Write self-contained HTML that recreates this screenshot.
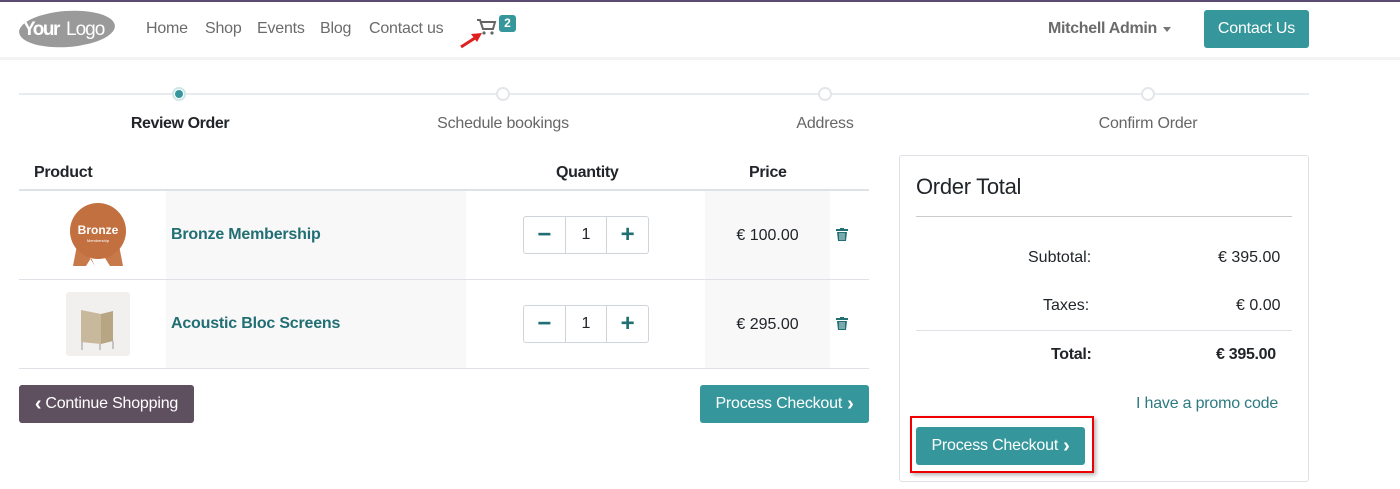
<!DOCTYPE html>
<html><head><meta charset="utf-8"><style>
*{box-sizing:border-box;margin:0;padding:0}
body{width:1400px;height:489px;overflow:hidden;background:#fff;font-family:"Liberation Sans",sans-serif;color:#212529;position:relative;font-size:16px}
.abs{position:absolute}
.nav a{position:absolute;top:20px;color:#6b6b6b;font-size:16px;letter-spacing:-.2px}
.btn{position:absolute;background:#35979c;color:#fff;border-radius:3px;font-size:16px;display:flex;align-items:center;justify-content:center;letter-spacing:-.2px}
.step{position:absolute;top:87px;width:14px;height:14px;border-radius:50%;border:2px solid #e4e6ea;background:#fff}
.lbl{position:absolute;top:115px;font-size:16px;color:#666;transform:translateX(-50%);white-space:nowrap;letter-spacing:-.2px}
.th{position:absolute;top:164px;font-weight:bold;font-size:16px;letter-spacing:-.3px}
.hr{position:absolute;height:1px;background:#dee2e6}
.pname{position:absolute;font-weight:bold;color:#216f73;font-size:16px;letter-spacing:-.2px}
.qty{position:absolute;left:523px;width:126px;height:38px;border:1px solid #ced4da;border-radius:3px;display:flex}
.qty div{flex:1;display:flex;align-items:center;justify-content:center;font-size:16px}
.qty div+div{border-left:1px solid #ced4da}
.qty .s{color:#216f73;font-size:24px;font-weight:bold}
.price{position:absolute;left:705px;width:125px;text-align:center;font-size:16px}
.trash{position:absolute;left:836px;width:12px;height:13px}
</style></head><body>
<div class="abs" style="left:0;top:0;width:1400px;height:2px;background:#5b4a72"></div>
<div class="abs" style="left:0;top:57px;width:1400px;height:3px;background:#f3f3f4"></div>
<svg class="abs" style="left:18px;top:10px" width="98" height="38"><ellipse cx="49" cy="19" rx="48" ry="18" fill="#9a9a9a" transform="rotate(-4 49 19)"/><text x="5" y="25" font-family="Liberation Sans" font-size="19" font-weight="bold" fill="#fff" letter-spacing="-1.5">Your</text><text x="48" y="25" font-family="Liberation Sans" font-size="19" fill="#fff" letter-spacing="-1">Logo</text></svg>
<div class="nav"><a style="left:146px">Home</a><a style="left:205px">Shop</a><a style="left:257px">Events</a><a style="left:320px">Blog</a><a style="left:369px">Contact us</a></div>
<svg class="abs" style="left:476px;top:18px" width="22" height="18"><path d="M1 2h3l3 9h10l2-7H5" fill="none" stroke="#666" stroke-width="2"/><circle cx="8" cy="15" r="1.6" fill="#666"/><circle cx="16" cy="15" r="1.6" fill="#666"/></svg>
<div class="abs" style="left:499px;top:15px;width:17px;height:17px;background:#35979c;border-radius:3px;color:#fff;font-size:12px;font-weight:bold;text-align:center;line-height:17px">2</div>
<svg class="abs" style="left:458px;top:30px" width="26" height="20"><path d="M3 17L17 8" stroke="#e02020" stroke-width="3"/><path d="M24 3L13 4l6 8z" fill="#e02020"/></svg>
<div class="abs" style="left:1048px;top:20px;font-weight:bold;color:#6b6b6b;letter-spacing:-.3px">Mitchell Admin</div>
<div class="abs" style="left:1163px;top:27px;border:4px solid transparent;border-top:5px solid #777"></div>
<div class="btn" style="left:1204px;top:10px;width:105px;height:38px">Contact Us</div>

<div class="hr" style="left:19px;top:93px;width:1290px;height:2px;background:#e9ecef"></div>
<div class="step" style="left:172px;border-color:#d0e6e7;"><div style="width:8px;height:8px;margin:1px;border-radius:50%;background:#35979c"></div></div>
<div class="step" style="left:496px"></div><div class="step" style="left:818px"></div><div class="step" style="left:1141px"></div>
<div class="lbl" style="left:180px;color:#212529;font-weight:bold;letter-spacing:-.4px">Review Order</div>
<div class="lbl" style="left:503px">Schedule bookings</div>
<div class="lbl" style="left:825px">Address</div>
<div class="lbl" style="left:1148px">Confirm Order</div>

<div class="th" style="left:34px">Product</div><div class="th" style="left:556px">Quantity</div><div class="th" style="left:749px">Price</div>
<div class="hr" style="left:19px;top:189px;width:850px;height:2px"></div>
<div class="abs" style="left:166px;top:191px;width:300px;height:177px;background:#f8f8f9"></div>
<div class="abs" style="left:705px;top:191px;width:125px;height:177px;background:#f8f8f9"></div>
<div class="hr" style="left:19px;top:279px;width:850px"></div>
<div class="hr" style="left:19px;top:368px;width:850px"></div>
<svg class="abs" style="left:68px;top:202px" width="60" height="66"><path d="M10 38L5 64h13l5-8 4 8h0z M50 38l5 26H42l-5-8 8-14z" fill="#c8794a"/><circle cx="30" cy="29" r="28" fill="#c27040"/><text x="30" y="32" text-anchor="middle" font-family="Liberation Sans" font-weight="bold" font-size="12" fill="#fff">Bronze</text><text x="30" y="40" text-anchor="middle" font-size="4" fill="#fff">Membership</text></svg>
<div class="abs" style="left:66px;top:292px;width:64px;height:64px;background:#f1f0ee;border-radius:3px"><svg width="64" height="64"><path d="M15 18l20 4v30l-20-2z" fill="#c9b99c"/><path d="M35 22l12-3v30l-12 3z" fill="#b7a583"/><path d="M16 50v8M34 52v6M47 49v8" stroke="#999"/></svg></div>
<div class="pname" style="left:171px;top:226px">Bronze Membership</div>
<div class="pname" style="left:171px;top:315px">Acoustic Bloc Screens</div>
<div class="qty" style="top:216px"><div class="s">−</div><div>1</div><div class="s">+</div></div>
<div class="qty" style="top:305px"><div class="s">−</div><div>1</div><div class="s">+</div></div>
<div class="price" style="top:227px">€ 100.00</div><div class="price" style="top:316px">€ 295.00</div>
<svg class="trash" style="top:228px" viewBox="0 0 12 13"><rect x="0" y="1" width="12" height="2" fill="#216f73"/><rect x="4" y="0" width="4" height="2" fill="#216f73"/><path d="M1 4h10l-1 9H2z" fill="#216f73"/><path d="M4 5v7M6 5v7M8 5v7" stroke="#fff" stroke-width=".8"/></svg>
<svg class="trash" style="top:317px" viewBox="0 0 12 13"><rect x="0" y="1" width="12" height="2" fill="#216f73"/><rect x="4" y="0" width="4" height="2" fill="#216f73"/><path d="M1 4h10l-1 9H2z" fill="#216f73"/><path d="M4 5v7M6 5v7M8 5v7" stroke="#fff" stroke-width=".8"/></svg>
<div class="btn" style="left:19px;top:385px;width:175px;height:38px;background:#5f5060"><b style="font-size:20px;margin-right:4px">‹</b>Continue Shopping</div>
<div class="btn" style="left:700px;top:385px;width:169px;height:38px">Process Checkout<b style="font-size:20px;margin-left:5px">›</b></div>

<div class="abs" style="left:899px;top:155px;width:410px;height:327px;border:1px solid #dee2e6;border-radius:3px"></div>
<div class="abs" style="left:916px;top:174px;font-size:22px;letter-spacing:-.3px">Order Total</div>
<div class="hr" style="left:916px;top:216px;width:376px;background:#ccc"></div>
<div class="abs" style="left:1028px;top:249px">Subtotal:</div><div class="abs" style="left:1218px;top:249px">€ 395.00</div>
<div class="abs" style="left:1043px;top:297px">Taxes:</div><div class="abs" style="left:1236px;top:297px">€ 0.00</div>
<div class="hr" style="left:916px;top:330px;width:376px"></div>
<div class="abs" style="left:1051px;top:346px;font-weight:bold;letter-spacing:-.3px">Total:</div><div class="abs" style="left:1216px;top:346px;font-weight:bold;letter-spacing:-.3px">€ 395.00</div>
<div class="abs" style="left:1136px;top:395px;color:#2b7b80;letter-spacing:-.2px">I have a promo code</div>
<div class="abs" style="left:910px;top:416px;width:184px;height:57px;border:2px solid #e00;box-shadow:2px 2px 4px rgba(0,0,0,.3)"></div>
<div class="btn" style="left:916px;top:427px;width:169px;height:38px">Process Checkout<b style="font-size:20px;margin-left:5px">›</b></div>
</body></html>
